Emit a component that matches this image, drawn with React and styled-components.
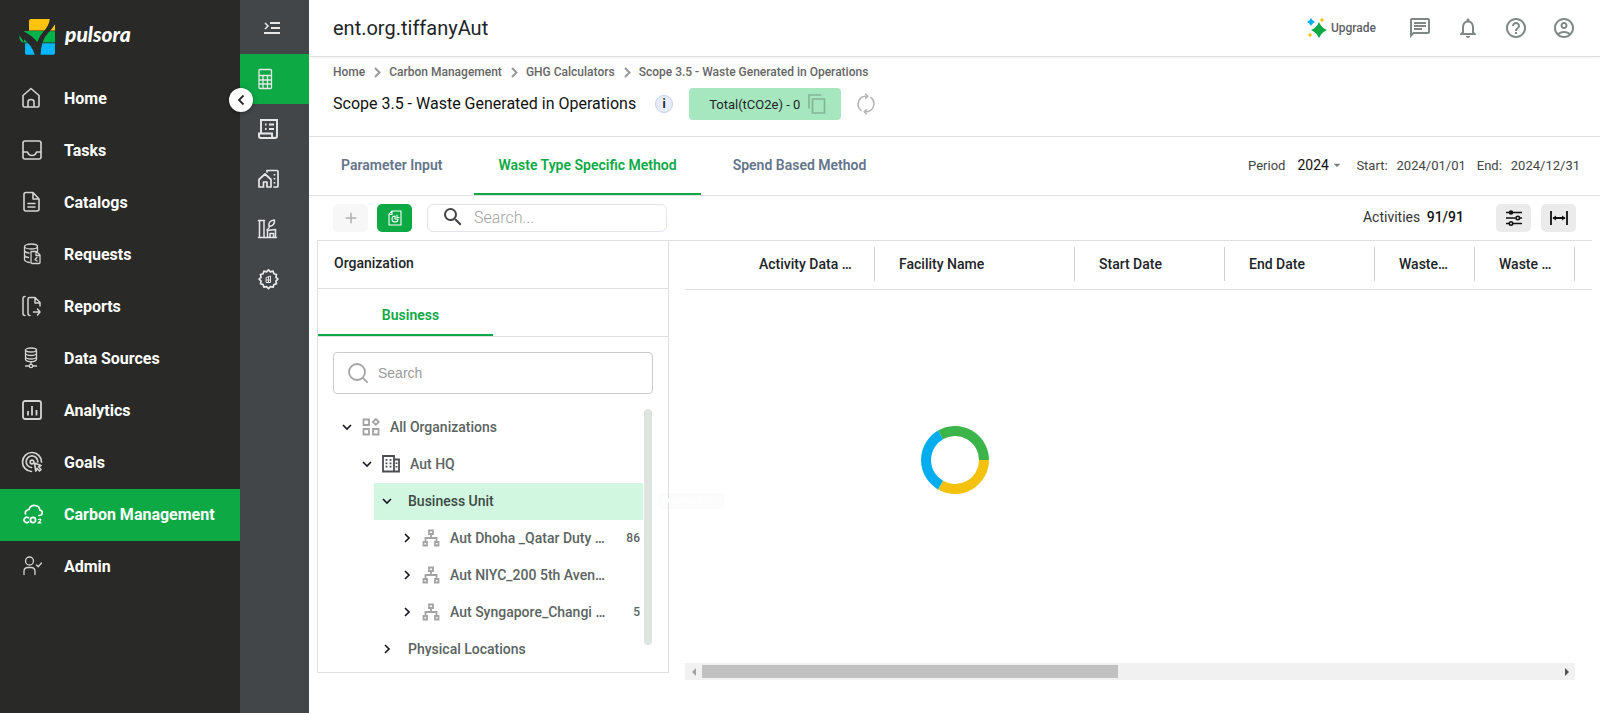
import React from "react";
import styled, { createGlobalStyle, css } from "styled-components";
import {
  MdOutlineChat,
  MdNotificationsNone,
  MdHelpOutline,
  MdOutlineAccountCircle,
  MdSearch,
  MdAdd,
  MdArrowDropDown,
} from "react-icons/md";

const c = {
  green: "#0ca945",
  dark: "#292927",
  rail: "#434649",
  line: "#dfdfdf",
  ink: "#212427",
  slate: "#64748b",
  tree: "#5b6461",
};

const GlobalStyle = createGlobalStyle`
  *, *::before, *::after { box-sizing: border-box; }
  body { margin: 0; background: #fff; color: ${c.ink}; font-family: Roboto, "Liberation Sans", sans-serif; font-size: 14px; }
  button, input, select { font: inherit; color: inherit; }
  button { border: 0; padding: 0; background: none; cursor: pointer; }
  a { color: inherit; text-decoration: none; }
  ul, ol { list-style: none; margin: 0; padding: 0; }
  h1, h2, h3 { margin: 0; font-weight: 400; }
  svg { display: block; flex: none; }
`;

const Shell = styled.div`
  display: flex;
  min-height: 100vh;
`;

/* Sidebar */
const Sidebar = styled.aside`
  flex: none;
  width: 240px;
  background: ${c.dark};
  color: #fff;
`;
const Brand = styled.a`
  display: flex;
  align-items: center;
  gap: 9px;
  height: 73px;
  padding-left: 19px;
`;
const BrandName = styled.span`
  padding-bottom: 5px;
  font: italic 900 21px/26px Lato, sans-serif;
`;
const NavLink = styled.a`
  display: flex;
  align-items: center;
  gap: 20px;
  height: 52px;
  padding: 0 0 2px 20px;
  font-size: 16px;
  font-weight: 700;
  background: ${(p) => (p.$active ? c.green : "transparent")};
  svg { color: ${(p) => (p.$active ? "#fff" : "#d4d4d2")}; }
`;

/* Icon rail */
const Rail = styled.nav`
  position: relative;
  flex: none;
  width: 69px;
  background: ${c.rail};
  color: #e8e8e8;
`;
const RailToggle = styled.button`
  display: flex;
  align-items: center;
  width: 100%;
  height: 54px;
  padding: 2px 0 0 24px;
`;
const RailLink = styled.a`
  display: flex;
  align-items: center;
  height: 50px;
  padding-left: 16px;
  background: ${(p) => (p.$active ? c.green : "transparent")};
`;
const Collapse = styled.button`
  position: absolute;
  top: 88px;
  left: -11px;
  display: grid;
  place-items: center;
  width: 24px;
  height: 24px;
  border-radius: 50%;
  background: #fff;
  color: ${c.dark};
  box-shadow: 0 1px 4px rgba(0, 0, 0, 0.4);
`;

/* Page */
const Page = styled.main`
  flex: 1;
  min-width: 0;
  display: flex;
  flex-direction: column;
`;
const TopBar = styled.header`
  display: flex;
  align-items: center;
  justify-content: space-between;
  height: 57px;
  padding: 0 24px;
  border-bottom: 1px solid ${c.line};
  box-shadow: 0 1px 3px rgba(0, 0, 0, 0.06);
`;
const OrgName = styled.h1`
  font-size: 20px;
  line-height: 24px;
`;
const TopActions = styled.div`
  display: flex;
  align-items: center;
  gap: 24px;
  color: #7f8885;
`;
const Upgrade = styled.button`
  display: flex;
  align-items: center;
  gap: 4px;
  margin-right: 8px;
  font-size: 12px;
  font-weight: 500;
  color: #5d6166;
`;
const TitleBlock = styled.section`
  height: 80px;
  padding: 7px 24px 0;
  border-bottom: 1px solid ${c.line};
`;
const Crumbs = styled.ol`
  display: flex;
  align-items: center;
  font-size: 12px;
  font-weight: 500;
  line-height: 16px;
  color: #666;
  li { display: flex; align-items: center; }
  svg { margin: 1px 8px 0 9px; color: #999; }
`;
const TitleRow = styled.div`
  display: flex;
  align-items: center;
  margin-top: 8px;
`;
const PageTitle = styled.h2`
  font-size: 16px;
  line-height: 20px;
  color: #111;
`;
const Info = styled.button`
  width: 18px;
  height: 18px;
  margin: 0 16px 0 19px;
  border: 1px solid #c3cfe2;
  border-radius: 50%;
  background: #e6edf8;
  font-size: 12px;
  font-weight: 700;
  line-height: 16px;
  color: #222;
`;
const Total = styled.div`
  display: flex;
  align-items: center;
  gap: 8px;
  height: 32px;
  margin-right: 16px;
  padding: 0 15px 0 20px;
  border-radius: 4px;
  background: #a6e7bf;
  font-size: 13px;
  button { color: #84b598; }
`;
const Refresh = styled.button`
  color: #b4b4b4;
`;

/* Method tabs */
const MethodBar = styled.div`
  display: flex;
  align-items: center;
  justify-content: space-between;
  height: 59px;
  padding: 0 20px 0 8px;
  border-bottom: 1px solid ${c.line};
`;
const Tabs = styled.div`
  display: flex;
  align-self: stretch;
  gap: 8px;
`;
const Tab = styled.button`
  padding: 0 24px;
  border-bottom: 2px solid ${(p) => (p.$active ? c.green : "transparent")};
  font-weight: 600;
  color: ${(p) => (p.$active ? c.green : c.slate)};
`;
const Period = styled.div`
  display: flex;
  align-items: center;
  padding-bottom: 2px;
  font-size: 13px;
  color: #444;
`;
const PeriodPick = styled.label`
  display: flex;
  align-items: center;
  gap: 12px;
`;
const SelectWrap = styled.span`
  display: flex;
  align-items: center;
`;
const YearSelect = styled.select`
  appearance: none;
  border: 0;
  padding: 0;
  background: none;
  font-size: 14px;
  color: #111;
`;
const DateLabel = styled.span`
  margin: 0 9px 0 11px;
`;

/* Toolbar */
const Toolbar = styled.div`
  display: flex;
  align-items: center;
  height: 44px;
  padding: 0 24px;
`;
const ToolButton = styled.button`
  display: grid;
  place-items: center;
  width: 35px;
  height: 28px;
  border-radius: 5px;
  background: #ebebeb;
  color: #111;
  ${(p) => p.$kind === "off" && css`background: #f7f7f7; color: #b0b0b0;`}
  ${(p) => p.$kind === "primary" && css`background: ${c.green}; color: #fff; margin: 0 15px 0 9px;`}
`;
const QuickSearch = styled.label`
  display: flex;
  align-items: center;
  gap: 9px;
  width: 240px;
  height: 28px;
  padding: 0 0 2px 13px;
  border: 1px solid #e2e3ec;
  border-radius: 6px;
  color: #444;
  input {
    flex: 1;
    min-width: 0;
    border: 0;
    padding: 0;
    outline: 0;
    background: none;
    font-size: 16px;
    font-weight: 300;
  }
  input::placeholder { color: #a2a2a2; opacity: 1; }
`;
const Counter = styled.div`
  margin-left: auto;
  margin-right: 32px;
  padding-bottom: 2px;
  color: #333;
  b { margin-left: 3px; font-weight: 500; color: #111; }
`;
const ToolPair = styled.div`
  display: flex;
  gap: 10px;
`;

/* Workspace */
const Workspace = styled.div`
  position: relative;
  flex: 1;
  display: flex;
  align-items: stretch;
  padding: 0 8px 33px;
`;
const OrgPanel = styled.section`
  position: relative;
  flex: none;
  align-self: flex-start;
  width: 352px;
  border: 1px solid ${c.line};
`;
const PanelTitle = styled.h3`
  height: 48px;
  padding: 14px 16px;
  border-bottom: 1px solid ${c.line};
  font-size: 14px;
  line-height: 16px;
  font-weight: 500;
`;
const PanelTabs = styled.div`
  height: 48px;
  border-bottom: 1px solid ${c.line};
  display: flex;
`;
const PanelTab = styled.button`
  width: 175px;
  padding: 6px 0 0 10px;
  border-bottom: 2px solid ${c.green};
  font-weight: 600;
  color: ${c.green};
`;
const TreeSearch = styled.label`
  display: flex;
  align-items: center;
  gap: 10px;
  height: 42px;
  margin: 15px 15px;
  padding-left: 14px;
  border: 1px solid #c9cbcd;
  border-radius: 4px;
  color: #a5a5a5;
  input {
    flex: 1;
    min-width: 0;
    border: 0;
    padding: 0;
    outline: 0;
    background: none;
    font-family: "Liberation Sans", sans-serif;
    font-size: 14px;
  }
  input::placeholder { color: #9a9a9a; opacity: 1; }
`;
const TreeArea = styled.div`
  display: flex;
  gap: 1px;
  height: 247px;
  margin: 0 16px 16px;
  overflow: hidden;
`;
const Tree = styled.ul`
  flex: 1;
  min-width: 0;
`;
const TreeRow = styled.li`
  display: flex;
  align-items: center;
  height: 37px;
  margin-left: ${(p) => p.$depth * 20}px;
  padding: 0 3px 2px 6px;
  background: ${(p) => (p.$selected ? "#d2f7e0" : "transparent")};
  color: ${(p) => (p.$selected ? "#3c4a44" : c.tree)};
  font-weight: 500;
`;
const Twist = styled.button`
  display: grid;
  place-items: center;
  width: 14px;
  height: 14px;
  margin-right: ${(p) => (p.$plain ? 14 : 8)}px;
  color: #16161f;
`;
const TreeIcon = styled.span`
  margin-right: 10px;
  color: ${(p) => (p.$dark ? "#4b4d50" : "#a3a3a3")};
`;
const TreeName = styled.span`
  white-space: nowrap;
`;
const TreeCount = styled.span`
  margin-left: auto;
  font-size: 12px;
`;
const TreeThumb = styled.div`
  flex: none;
  width: 8px;
  height: 236px;
  border-radius: 4px;
  background: #dee5e1;
`;
const Tooltip = styled.div`
  position: absolute;
  left: 340px;
  top: 252px;
  width: 67px;
  height: 16px;
  border-radius: 3px;
  background: rgba(0, 0, 0, 0.012);
  color: #fff;
  font-size: 10px;
  line-height: 16px;
  text-align: center;
`;

/* Grid */
const GridPane = styled.section`
  flex: 1;
  min-width: 0;
  display: flex;
  flex-direction: column;
  padding-left: 16px;
  background: linear-gradient(${c.line}, ${c.line}) 0 0 / 100% 1px no-repeat;
`;
const GridTable = styled.table`
  width: 100%;
  table-layout: fixed;
  border-collapse: collapse;
  margin-top: 1px;
  tr { height: 48px; border-bottom: 1px solid ${c.line}; }
  th { padding: 0; text-align: left; font-weight: 500; vertical-align: top; }
`;
const HeadCell = styled.div`
  height: 34px;
  margin-top: 6px;
  padding-left: 24px;
  border-right: 1px solid #cfcfcf;
  line-height: 34px;
  white-space: nowrap;
`;
const LoadingOverlay = styled.div`
  position: absolute;
  inset: 0 0 33px;
  display: grid;
  place-items: center;
  pointer-events: none;
`;
const ScrollTrack = styled.div`
  display: flex;
  align-items: center;
  height: 17px;
  margin: auto 17px 0 0;
  background: #f1f1f1;
`;
const ScrollArrow = styled.button`
  display: grid;
  place-items: center;
  flex: none;
  width: 17px;
  height: 17px;
  color: ${(p) => (p.$on ? "#505050" : "#a3a3a3")};
`;
const ScrollRun = styled.div`
  flex: 1;
`;
const ScrollThumb = styled.div`
  width: 48.6%;
  height: 13px;
  background: #c1c1c1;
`;

function Icon({ w = 24, h = w, box = "0 0 24 24", sw = 1.6, children }) {
  return (
    <svg width={w} height={h} viewBox={box} fill="none" stroke="currentColor" strokeWidth={sw} strokeLinejoin="round" strokeLinecap="round" aria-hidden="true">
      {children}
    </svg>
  );
}

const Logo = () => (
  <svg width="37" height="36" viewBox="0 0 37 36" aria-hidden="true">
    <path d="M12 0h24v11.500H10V2q0-2 2-2z" fill="#ffc20e" />
    <path d="M5 12.200h31v11.300H5z" fill="#00b34a" />
    <path d="M6 24.300h30V34q0 1.700-1.700 1.700H7.700Q6 35.700 6 34z" fill="#00b6ff" />
    <path d="M36.500-1v5.500Q33 10 29.500 13.500 22 21 21.500 36.500H16Q14 27 3 18.500L5 12.500Q14 17 18.300 23 20 17 24.500 12.500 30 7 31 -1z" fill={c.dark} />
    <path d="M8.500 12.200h16q-4.500 5-6.500 10.300Q13.500 16 5 12.200z" fill="#00b34a" />
    <path d="M0 16.500q3.500 3.500 5 7H3.500Q.5 22 0 16.500z" fill="#00b34a" />
  </svg>
);

const icons = {
  home: <Icon><path d="M3 9.500 11 2.500l8 7V19.500q0 1.500-1.500 1.500h-13Q3 21 3 19.500zM8 21v-5q0-2.500 3-2.500t3 2.500v5" /></Icon>,
  tasks: <Icon><rect x="3" y="3" width="18" height="18" rx="2" /><path d="M3 14h4.500q1 3.500 4.500 3.500t4.500-3.500H21" /></Icon>,
  catalogs: <Icon><path d="M19 17.500V19q0 2-2 2H6q-2 0-2-2V4.500q0-2 2-2h7L19 9zM13 2.500V9h6M8 13.500h7M8 17h7" /></Icon>,
  requests: (
    <Icon sw={1.3}><ellipse cx="11" cy="4.500" rx="6.500" ry="2.500" /><path d="M4.500 4.500v13.500q1 2 5 2.500M4.500 9q1.500 2 4.500 2M4.500 13.500q1.500 2 4 2M17.500 4.500V9M11 9.500h5.500l3.500 3.500v7.500q0 1-1 1h-7q-1 0-1-1zM16 9.500V13.500h4M17 15.500l-2 2 2 1.500" /></Icon>
  ),
  reports: <Icon sw={1.5}><path d="M5 2.500q-2 0-2 2v15q0 2 2 2M10 21.500q-2 0-2-2V5q0-1.500 1.500-1.500H15l5 5V12M15 3.500V9h5M13.500 18H20M17.500 15l2.500 3-2.500 3" /></Icon>,
  sources: <Icon sw={1.3}><ellipse cx="11" cy="4" rx="5.500" ry="2" /><path d="M5.500 4v9.500q1 2.200 5.500 2.200t5.500-2.200V4M5.500 7.500q1 2 5.500 2t5.500-2M5.500 11q1 2 5.500 2t5.500-2M11 16v2M5.500 20H9M13 20h3.500" /><circle cx="11" cy="20" r="1.700" /></Icon>,
  analytics: <Icon sw={1.8}><rect x="3" y="3" width="18" height="18" rx="2" /><path d="M8 13v4.500M12 8v9.500M16.500 12v5.500" strokeLinecap="butt" /></Icon>,
  goals: <Icon sw={1.700}><path d="M11.500 21.500A9.500 9.500 0 1 1 21.500 12M11.500 17.500A5.800 5.800 0 1 1 17.800 12M14.500 13l6.500 2.500-2.500 1.200L21 19.500l-1.500 1.500-2.500-2.500-1.200 2.500z" /><circle cx="12" cy="12" r="1.800" /></Icon>,
  admin: <Icon sw={1.300}><circle cx="9.500" cy="7" r="4" /><path d="M4 20.500v-3q0-4 4-4h3q4 0 4 4v3M16.500 11l1.700 1.700L21.500 9" /></Icon>,
};

const CarbonIcon = () => (
  <svg width="24" height="24" viewBox="0 0 24 24" fill="none" stroke="currentColor" strokeWidth="1.700" strokeLinecap="round" aria-hidden="true">
    <path d="M5.500 12Q4.500 8.500 9 7.500q1.500-4.500 6-4 4.500.500 4.800 4.500Q23 9 22 12q-.5 1.500-3 1.500" />
    <path d="M8.500 15.800a2.700 2.700 0 1 0 0 4.200" />
    <circle cx="13" cy="18" r="2.600" />
    <path d="M18.500 17.500q2-.8 2.300.3 0 1-2.300 3h2.500" strokeWidth="1.200" />
  </svg>
);

const nav = [
  ["Home", icons.home],
  ["Tasks", icons.tasks],
  ["Catalogs", icons.catalogs],
  ["Requests", icons.requests],
  ["Reports", icons.reports],
  ["Data Sources", icons.sources],
  ["Analytics", icons.analytics],
  ["Goals", icons.goals],
  ["Carbon Management", <CarbonIcon key="c" />],
  ["Admin", icons.admin],
];

const rail = [
  ["Calculators", <Icon key="a" sw={1.300}><path d="M4 2.500h10.500q1 0 1 1V20.500q0 1-1 1H4q-1 0-1-1V3.500q0-1 1-1zM3 8.500h12.500M3 13h12.500M3 17h12.500M7 8.500V21M11.500 8.500V21" /></Icon>],
  ["Ledger", <Icon key="b" sw={1.900}><path d="M5 16.500V3h16v16q0 2-2 2H5q-2 0-2-2v-2.500h13V19q0 2 2 2" strokeLinejoin="miter" /><path d="M9 7.500h1.500M13 7.500h5M9 12h1.500M13 12h5" strokeLinecap="butt" /></Icon>],
  ["Facilities", <Icon key="c" sw={1.700}><path d="M3 12.500 9 7l6 5.500V20h-4v-5H7.500v5H3zM11 5V3.500h10q1 0 1 1V19q0 1-1 1h-3" /><path d="M18.500 7v1.500M18.500 11v1.500M18.500 15v1.500" strokeLinecap="butt" /></Icon>],
  ["Plants", <Icon key="d" sw={1.500}><path d="M2.500 20.500h18M3.500 20V3.500M8 20V3.500M2.500 3.500h6M11.500 20v-6.500l8-1V20M14 20v-3.500h3.500V20M11 13q2-2 3-4M13 9.500Q12 3.500 18.500 3q.5 6-5.500 6.500z" /></Icon>],
  ["Settings", <Icon key="e" sw={1.700}><path d="M10.600 4.800 12.500 2.800l1.900 2 2.700-.6.800 2.600 2.600.8-.6 2.700 2 1.900-2 1.900.6 2.700-2.600.8-.8 2.600-2.700-.6-1.900 2-1.900-2-2.700.6-.8-2.600-2.600-.8.600-2.700-2-1.900 2-1.900-.6-2.700 2.600-.8.800-2.600z" /><path d="M10.500 10.500l4-1.500v6.500h-4zM10.500 13h4M12.500 10v5.500" strokeWidth="1" /></Icon>],
];

const Chevron = ({ open }) => (
  <Icon w={10} box="0 0 10 10" sw={1.600}>
    <path d={open ? "M1 3l4 4 4-4" : "M3 1l4 4-4 4"} strokeLinecap="butt" strokeLinejoin="miter" />
  </Icon>
);

const GroupIcon = () => (
  <Icon w={18} box="0 0 18 18" sw={1.800}>
    <path d="M1.500 1.500h5.500V7H1.500zM1.500 11H7v5.500H1.500zM11 11h5.500v5.500H11zM13.800 1l2.900 2.900-2.900 2.900-2.900-2.900z" strokeLinejoin="miter" />
  </Icon>
);
const BuildingIcon = () => (
  <Icon w={18} box="0 0 18 18" sw={1.800}>
    <path d="M1 1h11v15.500H1zM12 4.500h5v12h-5" strokeLinejoin="miter" />
    <path d="M4.500 4v10M8.500 4v10" strokeDasharray="1.800 1.600" strokeLinecap="butt" />
    <path d="M14.500 7.500v1.500M14.500 11v1.500" strokeLinecap="butt" />
  </Icon>
);
const UnitIcon = () => (
  <Icon w={18} box="0 0 18 18" sw={1.800}>
    <path d="M7 1.500h4V5H7zM1.500 13h3.500v3.500H1.500zM13 13h3.500v3.500H13zM9 5v4M3.500 13V9h11v4" strokeLinejoin="miter" />
  </Icon>
);

const treeRows = [
  { name: "All Organizations", depth: 0, open: true, icon: <GroupIcon /> },
  { name: "Aut HQ", depth: 1, open: true, icon: <BuildingIcon />, dark: true },
  { name: "Business Unit", depth: 2, open: true, selected: true },
  { name: "Aut Dhoha _Qatar Duty …", depth: 3, icon: <UnitIcon />, count: 86 },
  { name: "Aut NIYC_200 5th Aven…", depth: 3, icon: <UnitIcon /> },
  { name: "Aut Syngapore_Changi …", depth: 3, icon: <UnitIcon />, count: 5 },
  { name: "Physical Locations", depth: 2 },
];

const columns = [
  ["Activity Data …", 140],
  ["Facility Name", 200],
  ["Start Date", 150],
  ["End Date", 150],
  ["Waste…", 100],
  ["Waste …", 100],
];

const Spinner = () => (
  <svg width="68" height="68" viewBox="-34 -34 68 68" fill="none" strokeWidth="10" role="img" aria-label="Loading">
    <path d="M-14.500-25.100A29 29 0 0 1 29 0" stroke="#3bb54a" />
    <path d="M29 0A29 29 0 0 1-14.500 25.100" stroke="#f4c20d" />
    <path d="M-14.500 25.100A29 29 0 0 1-14.500-25.100" stroke="#00aeef" />
  </svg>
);

const crumbs = ["Home", "Carbon Management", "GHG Calculators", "Scope 3.5 - Waste Generated in Operations"];

export default function App() {
  return (
    <>
      <GlobalStyle />
      <Shell>
        <Sidebar>
          <Brand href="#">
            <Logo />
            <BrandName>pulsora</BrandName>
          </Brand>
          <nav>
            {nav.map(([label, icon]) => (
              <NavLink key={label} href="#" $active={label === "Carbon Management"}>
                {icon}
                {label}
              </NavLink>
            ))}
          </nav>
        </Sidebar>

        <Rail>
          <RailToggle aria-label="Toggle menu">
            <svg width="16" height="12" viewBox="0 0 16 12" fill="none" stroke="currentColor" strokeWidth="2" aria-hidden="true">
              <path d="M6 1h10M7 6h9M0 11h16" />
              <path d="M1 1l3 3-3 3" strokeWidth="1.500" />
            </svg>
          </RailToggle>
          {rail.map(([label, icon], i) => (
            <RailLink key={label} href="#" aria-label={label} $active={i === 0}>
              {icon}
            </RailLink>
          ))}
          <Collapse aria-label="Collapse sidebar">
            <Icon w={12} box="0 0 12 12" sw={1.800}><path d="M8.500 1.500 4 6l4.500 4.500" strokeLinecap="butt" strokeLinejoin="miter" /></Icon>
          </Collapse>
        </Rail>

        <Page>
          <TopBar>
            <OrgName>ent.org.tiffanyAut</OrgName>
            <TopActions>
              <Upgrade>
                <svg width="20" height="20" viewBox="0 0 20 20" aria-hidden="true">
                  <path d="M12 4q2.500 6 8 8-5.500 2.500-8 8-2.500-5.500-8-8 5.500-2 8-8z" fill="#0ca945" />
                  <path d="M4 0q1.200 2.800 4 4-2.800 1.200-4 4-1.200-2.800-4-4 2.800-1.200 4-4z" fill="#00aeef" />
                  <path d="M15 0q.4 1.600 2 2-1.600.4-2 2-.4-1.600-2-2 1.600-.4 2-2zM3 15q.4 1.600 2 2-1.600.4-2 2-.4-1.600-2-2 1.600-.4 2-2z" fill="#f4c20d" stroke="#f4c20d" strokeWidth=".5" />
                </svg>
                Upgrade
              </Upgrade>
              <button aria-label="Messages"><MdOutlineChat size={24} /></button>
              <button aria-label="Notifications"><MdNotificationsNone size={24} /></button>
              <button aria-label="Help"><MdHelpOutline size={24} /></button>
              <button aria-label="Account"><MdOutlineAccountCircle size={24} /></button>
            </TopActions>
          </TopBar>

          <TitleBlock>
            <Crumbs>
              {crumbs.map((text, i) => (
                <li key={text}>
                  {i > 0 && <Icon w={7} h={11} box="0 0 7 11" sw={2}><path d="M1 1l4.500 4.500L1 10" strokeLinecap="butt" strokeLinejoin="miter" /></Icon>}
                  <a href="#">{text}</a>
                </li>
              ))}
            </Crumbs>
            <TitleRow>
              <PageTitle>Scope 3.5 - Waste Generated in Operations</PageTitle>
              <Info aria-label="Information">i</Info>
              <Total>
                Total(tCO2e) - 0
                <button aria-label="Copy total">
                  <Icon w={18} h={20} box="0 0 18 20" sw={1.700}><path d="M4.500 5h12v14h-12zM1 14.500V1h12.500" strokeLinejoin="miter" strokeLinecap="butt" /></Icon>
                </button>
              </Total>
              <Refresh aria-label="Recalculate">
                <Icon w={18} h={22} box="0 0 18 22" sw={1.500}>
                  <path d="M4.500 17.800A8.100 8.100 0 0 1 8 3.200h2M13.500 4.200A8.100 8.100 0 0 1 10 18.800H8" strokeLinecap="butt" />
                  <path d="M8.200.800l2.600 2.400-2.600 2.400M9.800 21.200l-2.600-2.400 2.600-2.400" strokeLinejoin="miter" strokeLinecap="butt" />
                </Icon>
              </Refresh>
            </TitleRow>
          </TitleBlock>

          <MethodBar>
            <Tabs role="tablist">
              <Tab role="tab">Parameter Input</Tab>
              <Tab role="tab" aria-selected="true" $active>Waste Type Specific Method</Tab>
              <Tab role="tab">Spend Based Method</Tab>
            </Tabs>
            <Period>
              <PeriodPick>
                Period
                <SelectWrap>
                  <YearSelect defaultValue="2024"><option>2024</option></YearSelect>
                  <MdArrowDropDown size={16} color="#777" />
                </SelectWrap>
              </PeriodPick>
              <DateLabel>Start:</DateLabel>
              <span>2024/01/01</span>
              <DateLabel>End:</DateLabel>
              <span>2024/12/31</span>
            </Period>
          </MethodBar>

          <Toolbar>
            <ToolButton $kind="off" disabled aria-label="Add"><MdAdd size={18} /></ToolButton>
            <ToolButton $kind="primary" aria-label="Export report">
              <Icon w={14} h={16} box="0 0 14 16" sw={1.100}><path d="M4 1h9v14H1V4zM1 4.500h3V1" strokeLinejoin="miter" /><path d="M7 6a3 3 0 1 0 3 3H7zM9 5v2.500h2" /></Icon>
            </ToolButton>
            <QuickSearch>
              <MdSearch size={24} />
              <input placeholder="Search..." aria-label="Search activities" />
            </QuickSearch>
            <Counter>Activities <b>91/91</b></Counter>
            <ToolPair>
              <ToolButton aria-label="Filter settings">
                <Icon w={16} box="0 0 16 16" sw={1.600}><path d="M0 2.500h16M0 8h9.500M14 8h2M0 13.500h3M7 13.500h9" strokeLinecap="butt" /><circle cx="5" cy="2.500" r="1.500" fill="currentColor" /><circle cx="11.800" cy="8" r="1.700" /><circle cx="5" cy="13.500" r="1.700" /></Icon>
              </ToolButton>
              <ToolButton aria-label="Fit columns">
                <Icon w={18} h={14} box="0 0 18 14" sw={1.800}><path d="M1 0v14M17 0v14M3 7h12" strokeLinecap="butt" /><path d="M6 4.500v5L2.500 7zM12 4.500v5L15.500 7z" fill="currentColor" stroke="none" /></Icon>
              </ToolButton>
            </ToolPair>
          </Toolbar>

          <Workspace>
            <OrgPanel>
              <PanelTitle>Organization</PanelTitle>
              <PanelTabs role="tablist">
                <PanelTab role="tab" aria-selected="true">Business</PanelTab>
              </PanelTabs>
              <TreeSearch>
                <Icon w={20} box="0 0 20 20" sw={1.800}><circle cx="9" cy="9" r="8" /><path d="M15 15l4.500 4.500" /></Icon>
                <input placeholder="Search" aria-label="Search organizations" />
              </TreeSearch>
              <TreeArea>
                <Tree>
                  {treeRows.map((r) => (
                    <TreeRow key={r.name} $depth={r.depth} $selected={r.selected}>
                      <Twist $plain={!r.icon} aria-label={`Toggle ${r.name}`}><Chevron open={r.open} /></Twist>
                      {r.icon && <TreeIcon $dark={r.dark}>{r.icon}</TreeIcon>}
                      <TreeName>{r.name}</TreeName>
                      {r.count && <TreeCount>{r.count}</TreeCount>}
                    </TreeRow>
                  ))}
                </Tree>
                <TreeThumb />
              </TreeArea>
              <Tooltip>Business Unit</Tooltip>
            </OrgPanel>

            <GridPane>
              <GridTable>
                <colgroup>
                  <col width="50" />
                  {columns.map(([n, w]) => <col key={n} width={w} />)}
                  <col />
                </colgroup>
                <thead>
                  <tr>
                    <th />
                    {columns.map(([n]) => <th key={n} scope="col"><HeadCell>{n}</HeadCell></th>)}
                    <th />
                  </tr>
                </thead>
              </GridTable>
              <ScrollTrack>
                <ScrollArrow aria-label="Scroll left"><svg width="4" height="8" viewBox="0 0 4 8"><path d="M4 0v8L0 4z" fill="currentColor" /></svg></ScrollArrow>
                <ScrollRun><ScrollThumb /></ScrollRun>
                <ScrollArrow $on aria-label="Scroll right"><svg width="4" height="8" viewBox="0 0 4 8"><path d="M0 0v8l4-4z" fill="currentColor" /></svg></ScrollArrow>
              </ScrollTrack>
            </GridPane>
            <LoadingOverlay><Spinner /></LoadingOverlay>
          </Workspace>
        </Page>
      </Shell>
    </>
  );
}
